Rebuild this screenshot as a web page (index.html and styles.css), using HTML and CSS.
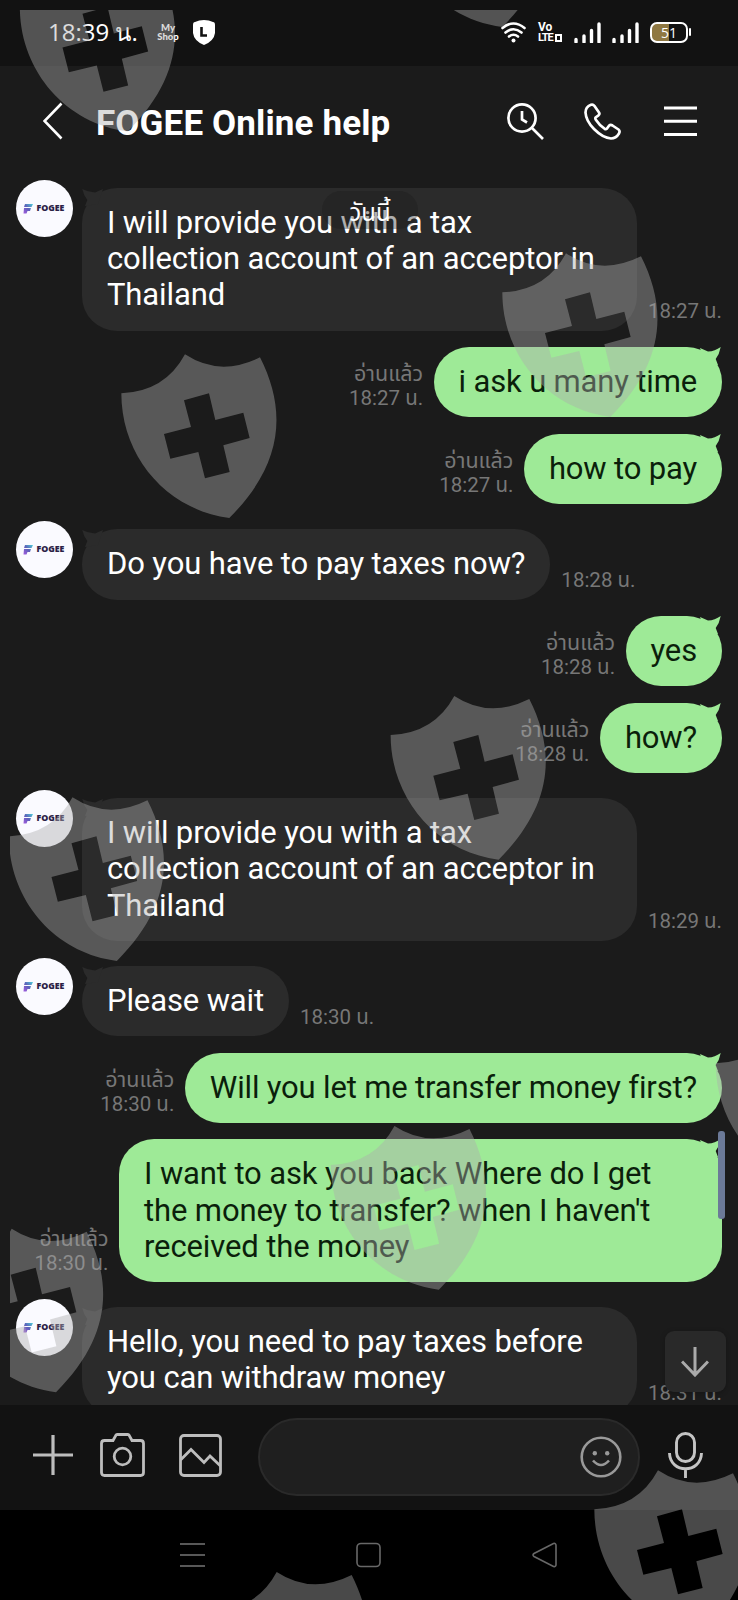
FILE: index.html
```html
<!DOCTYPE html>
<html lang="th">
<head>
<meta charset="utf-8">
<title>FOGEE Online help</title>
<link rel="stylesheet" href="styles.css">
</head>
<body>
<svg class="defs" width="0" height="0">
  <defs>
    <linearGradient id="flag" x1="1" y1="0" x2="0" y2="1"><stop offset="0" stop-color="#4fd0d8"/><stop offset=".5" stop-color="#5c5fb8"/><stop offset="1" stop-color="#a35be0"/></linearGradient>
    <symbol id="fogee" viewBox="0 0 10 11"><path d="M2 1H10L8.500 4H1zM1 5H8L7 8H4.500L3.500 10.500H.5z" fill="url(#flag)"/></symbol>
    <symbol id="tail-out" viewBox="0 0 24 20"><path d="M3 1L11 4.600Q18 4.200 23.700 0Q22.500 7 18.700 12L21 18L8 16z" fill="#9eea97"/></symbol>
    <symbol id="tail-in" viewBox="0 0 24 20"><path d="M21 1L13 4.600Q6 4.200 .3 1Q1.500 7 5.300 12L3 18L16 16z" fill="#2b2b2b"/></symbol>
    <symbol id="bars" viewBox="0 0 27 21"><path d="M2 20V17.500M10 20V14M17.500 20V8.500M25 20V2" fill="none" stroke="#fff" stroke-width="3.400" stroke-linecap="round"/></symbol>
    <path id="shield" fill-rule="evenodd" d="M255 43Q360 112 480 52C560 210 552 370 388 534C200 510 64 350 64 160Q195 155 255 43ZM252 181L327 160L346 240L430 218L449 294L370 316L389 396L315 415L295 336L211 356L192 282L273 261Z"/>
  </defs>
</svg>
<div class="phone">
  <div class="status">
    <span class="clock">18:39 น.</span>
    <span class="shop">My<br>Shop</span>
    <span class="badge"><svg width="22" height="25" viewBox="0 0 22 25"><path d="M11 0Q16 0 20 2Q22 2 22 5V13Q21 21 11 25Q1 21 0 13V5Q0 2 2 2Q6 0 11 0Z" fill="#fff"/><path d="M8.500 7V15.500H14" fill="none" stroke="#121212" stroke-width="2.600"/></svg></span>
    <span class="status-right">
      <svg width="26" height="22" viewBox="0 0 26 22" fill="none" stroke="#fff" stroke-width="2.600" stroke-linecap="round"><path d="M1.500 6Q12.500-3 23.500 6M4.500 10.500Q12.500 4 20.500 10.500M8 14.500Q12.500 11 17 14.500"/><circle cx="12.500" cy="18.500" r="2" fill="#fff" stroke="none"/></svg>
      <span class="volte"><span>Vo</span><span class="lte">LTE<i></i></span></span>
      <svg class="sig1" width="27" height="21"><use href="#bars"/></svg>
      <svg class="sig2" width="27" height="21"><use href="#bars"/></svg>
      <span class="battery"><span>51</span></span><i class="cap"></i>
    </span>
  </div>
  <div class="header">
    <svg width="20" height="38" viewBox="0 0 20 38"><path d="M18.500 1.500L1.500 19L18.500 36.500" fill="none" stroke="#fff" stroke-width="2.600"/></svg>
    <h1>FOGEE Online help</h1>
    <svg class="find" width="37" height="37" viewBox="0 0 37 37" fill="none" stroke="#fff" stroke-width="2.700"><circle cx="15" cy="15" r="13.600"/><path d="M15 8V16.500L20 19.500M25 25L36 36"/></svg>
    <svg class="call" width="37" height="37" viewBox="0 0 37 37" fill="none" stroke="#fff" stroke-width="2.700" stroke-linejoin="round"><path d="M7 1.800Q9 1 10.500 3L15 9.500Q16 11 14.500 12.300L11.500 14.500Q11 15.500 12 17Q16 23 20.500 25.700Q22 26.500 23 25.500L25 22.800Q26.500 21.300 28.500 22.500L34.500 26.500Q36.300 28 35 30.500Q32 35.500 27 35.500Q19 35 10 26Q2 18 1.500 9.500Q1.500 4 7 1.800Z"/></svg>
    <svg class="menu" width="33" height="31" viewBox="0 0 33 31"><path d="M0 2H33M0 15.300H33M0 28.600H33" stroke="#fff" stroke-width="3"/></svg>
  </div>
  <div class="chat">
    <div class="row in"><div class="avatar"><svg width="10" height="11"><use href="#fogee"/></svg>FOGEE</div><div class="bubble wide"><svg class="tail"><use href="#tail-in"/></svg>I will provide you with a tax<br>collection account of an acceptor in<br>Thailand</div><div class="meta">18:27 น.</div></div>
    <div class="row out"><div class="meta"><span class="read">อ่านแล้ว</span><br>18:27 น.</div><div class="bubble"><svg class="tail"><use href="#tail-out"/></svg>i ask u many time</div></div>
    <div class="row out"><div class="meta"><span class="read">อ่านแล้ว</span><br>18:27 น.</div><div class="bubble"><svg class="tail"><use href="#tail-out"/></svg>how to pay</div></div>
    <div class="row in"><div class="avatar"><svg width="10" height="11"><use href="#fogee"/></svg>FOGEE</div><div class="bubble"><svg class="tail"><use href="#tail-in"/></svg>Do you have to pay taxes now?</div><div class="meta">18:28 น.</div></div>
    <div class="row out"><div class="meta"><span class="read">อ่านแล้ว</span><br>18:28 น.</div><div class="bubble"><svg class="tail"><use href="#tail-out"/></svg>yes</div></div>
    <div class="row out"><div class="meta"><span class="read">อ่านแล้ว</span><br>18:28 น.</div><div class="bubble"><svg class="tail"><use href="#tail-out"/></svg>how?</div></div>
    <div class="row in"><div class="avatar"><svg width="10" height="11"><use href="#fogee"/></svg>FOGEE</div><div class="bubble wide"><svg class="tail"><use href="#tail-in"/></svg>I will provide you with a tax<br>collection account of an acceptor in<br>Thailand</div><div class="meta">18:29 น.</div></div>
    <div class="row in"><div class="avatar"><svg width="10" height="11"><use href="#fogee"/></svg>FOGEE</div><div class="bubble"><svg class="tail"><use href="#tail-in"/></svg>Please wait</div><div class="meta">18:30 น.</div></div>
    <div class="row out"><div class="meta"><span class="read">อ่านแล้ว</span><br>18:30 น.</div><div class="bubble"><svg class="tail"><use href="#tail-out"/></svg>Will you let me transfer money first?</div></div>
    <div class="row out"><div class="meta"><span class="read">อ่านแล้ว</span><br>18:30 น.</div><div class="bubble full"><svg class="tail"><use href="#tail-out"/></svg>I want to ask you back Where do I get<br>the money to transfer? when I haven't<br>received the money</div></div>
    <div class="row in last"><div class="avatar"><svg width="10" height="11"><use href="#fogee"/></svg>FOGEE</div><div class="bubble wide"><svg class="tail"><use href="#tail-in"/></svg>Hello, you need to pay taxes before<br>you can withdraw money</div><div class="meta">18:31 น.</div></div>
    <div class="date">วันนี้</div>
    <i class="scrollbar"></i>
    <div class="down"><svg width="28" height="31" viewBox="0 0 28 31" fill="none" stroke="#aaa" stroke-width="3"><path d="M14 1V29M1 15.500L14 29L27 15.500"/></svg></div>
  </div>
  <div class="compose">
    <svg class="plus" width="40" height="40" viewBox="0 0 40 40"><path d="M20 0V40M0 20H40" stroke="#bdbdbd" stroke-width="3.200"/></svg>
    <svg class="camera" width="45" height="44" viewBox="0 0 45 44" fill="none" stroke="#bdbdbd" stroke-width="2.800"><path d="M4.500 7.500H13L16 2Q16.500 1.500 17.500 1.500H27.500Q28.500 1.500 29 2L32 7.500H40.500Q43.500 7.500 43.500 10.500V39.500Q43.500 42.500 40.500 42.500H4.500Q1.500 42.500 1.500 39.500V10.500Q1.500 7.500 4.500 7.500Z"/><circle cx="22.500" cy="23.500" r="8.300"/></svg>
    <svg class="photo" width="43" height="43" viewBox="0 0 43 43" fill="none" stroke="#bdbdbd" stroke-width="2.800"><rect x="1.500" y="1.500" width="40" height="40" rx="3.500"/><path d="M1.500 26L12 15.500L25 28.500L31 22L41.500 32"/></svg>
    <div class="field"><svg width="42" height="42" viewBox="0 0 42 42" fill="none" stroke="#999" stroke-width="2.600"><circle cx="21" cy="21" r="19.300"/><path d="M13 24.500Q21 33.500 29 24.500"/><circle cx="14.800" cy="17.300" r="2.200" fill="#999" stroke="none"/><circle cx="27.200" cy="17.300" r="2.200" fill="#999" stroke="none"/></svg></div>
    <svg class="mic" width="35" height="46" viewBox="0 0 35 46" fill="none" stroke="#c4c4c4" stroke-width="2.900"><rect x="8.500" y="1.500" width="18" height="28" rx="9"/><path d="M1.500 21C2 42 33 42 33.500 21M17.500 37V46"/></svg>
  </div>
  <div class="nav">
    <svg width="25" height="26" viewBox="0 0 25 26"><path d="M0 2H25M0 13H25M0 24H25" stroke="#585858" stroke-width="1.800"/></svg>
    <svg width="25" height="26" viewBox="0 0 25 26"><rect x="1" y="1.500" width="23" height="23" rx="4" fill="none" stroke="#686868" stroke-width="1.600"/></svg>
    <svg width="25" height="26" viewBox="0 0 25 26"><path d="M21.500 1.500Q24 1 24 3.500V22.500Q24 25 21.500 24.500L2 14.500Q0 13 2 11.500Z" fill="none" stroke="#686868" stroke-width="1.600"/></svg>
  </div>
  <svg class="watermark" width="738" height="1600" viewBox="0 0 738 1600">
    <clipPath id="area"><rect x="10" y="10" width="728" height="1590"/></clipPath>
    <g clip-path="url(#area)" fill="#adadad" fill-opacity=".424">
      <use href="#shield" transform="translate(-1.500 -46.500) scale(.3333)"/>
      <use href="#shield" transform="translate(373 -151) scale(.3333)"/>
      <use href="#shield" transform="translate(481 239) scale(.3333)"/>
      <use href="#shield" transform="translate(100 340) scale(.3333)"/>
      <use href="#shield" transform="translate(369.300 681.700) scale(.3333)"/>
      <use href="#shield" transform="translate(-12.500 783) scale(.3333)"/>
      <use href="#shield" transform="translate(309.500 1111.700) scale(.3333)"/>
      <use href="#shield" transform="translate(694.400 1010) scale(.3333)"/>
      <use href="#shield" transform="translate(-73.300 1214.300) scale(.3333)"/>
      <use href="#shield" transform="translate(191.700 1557.700) scale(.3333)"/>
      <use href="#shield" transform="translate(573 1456) scale(.3333)"/>
    </g>
  </svg>
</div>
</body>
</html>
```
FILE: styles.css
```css
* { box-sizing: border-box; }
body { margin: 0; background: #1b1b1b; font-family: Roboto, "Noto Sans Thai", "Noto Sans", sans-serif; }
.defs { position: absolute; }
svg { display: block; flex: none; }
.phone { position: relative; width: 738px; height: 1600px; overflow: hidden; display: flex; flex-direction: column; }

.status { height: 66px; flex: none; background: #121212; color: #fff; display: flex; align-items: flex-start; padding-left: 48px; }
.clock { width: 108px; padding-top: 17px; font: 24px/30px "Open Sans", Roboto, sans-serif; white-space: nowrap; }
.shop { width: 24px; padding-top: 23px; font: 900 9.500px/9px Lato, sans-serif; text-align: center; display: flex; justify-content: center; }
.badge { margin-left: 13px; padding-top: 20px; }
.status-right { margin-left: auto; width: 237px; display: flex; align-items: flex-start; padding-top: 22px; }
.volte { margin-left: 11px; width: 25px; font: 700 12px/10px Roboto, sans-serif; display: flex; flex-direction: column; gap: 1px; }
.volte span { display: flex; }
.lte { font-size: 11px; letter-spacing: -1px; }
.volte i { width: 7px; height: 8px; border: 2px solid #fff; margin: 1px 0 0 2px; }
.sig1 { margin-left: 11px; }
.sig2 { margin-left: 11px; }
.battery { margin-left: 11px; width: 38px; height: 21px; border: 2px solid #fff; border-radius: 7px; background: linear-gradient(90deg, #8f7842 50%, #121212 50%); font: 14px/17px "Open Sans", sans-serif; text-align: center; }
.cap { width: 2px; height: 8px; margin: 6px 0 0 1px; background: #fff; border-radius: 1px; }

.header { height: 112px; flex: none; display: flex; align-items: flex-start; padding: 36px 41px 0 43px; color: #fff; }
.header h1 { margin: 2px 0 0 33px; font-size: 35px; letter-spacing: .13px; line-height: 40px; font-weight: 700; flex: 1; white-space: nowrap; }
.find { margin-top: 1px; }
.call { margin: 1px 43px 0 40px; }
.menu { margin-top: 4px; }

.chat { position: relative; height: 1227px; flex: none; overflow: hidden; padding: 1px 16px 0; display: flex; flex-direction: column; gap: 16px; }
.row { display: flex; flex: none; align-items: flex-end; }
.row.out { justify-content: flex-end; gap: 10.500px; height: 70.800px; }
.row.out:has(.full) { height: 143px; }
.row.in { gap: 11px; padding-top: 8.800px; align-items: flex-end; }
.avatar { width: 57px; height: 57px; margin: -8px -2px 0 0; align-self: flex-start; border-radius: 50%; background: #fafaff; color: #2a2146; font: 800 8.800px/11px "Open Sans", sans-serif; display: flex; align-items: center; justify-content: center; gap: 4px; padding-right: 2px; }
.bubble { position: relative; min-height: 70.600px; padding: 17px 25px; border-radius: 35px; font-size: 31px; letter-spacing: -.12px; line-height: 36.300px; white-space: nowrap; background: #2b2b2b; color: #fff; }
.wide { width: 555px; }
.out .bubble { background: #9eea97; color: #0b1f0b; letter-spacing: -.16px; }
.out .full { width: 603px; letter-spacing: -.12px; }
.tail { position: absolute; top: 0; width: 24px; height: 20px; }
.in .tail { left: 0; }
.out .tail { right: 1px; }
.meta { color: #777; font-size: 20.500px; line-height: 24px; padding-bottom: 7.500px; text-align: right; white-space: nowrap; }
.read { font-size: 21.500px; line-height: 20px; }
.last .meta { padding-bottom: 11px; }
.last .bubble { height: 109px; }
.date { position: absolute; left: 322px; top: 13px; width: 96px; height: 38px; border-radius: 19px; background: rgba(27, 27, 27, .35); color: #fff; font-size: 24px; line-height: 45px; text-align: center; }
.scrollbar { position: absolute; left: 718px; top: 953px; width: 7px; height: 88px; border-radius: 3px; background: #6c7a98; }
.down { position: absolute; left: 664.500px; top: 1153px; width: 61px; height: 61px; border-radius: 9px; background: #292929; box-shadow: 0 1px 5px rgba(0, 0, 0, .25); display: flex; align-items: center; justify-content: center; }

.compose { height: 105px; flex: none; background: #121212; display: flex; align-items: flex-start; padding: 13px 0 0 33px; }
.plus { margin-top: 17px; }
.camera { margin: 15px 0 0 27px; }
.photo { margin: 16px 0 0 34px; }
.field { width: 382px; height: 78px; margin-left: 36px; border: 2px solid #2a2a2a; border-radius: 39px; background: #1f1f1f; display: flex; justify-content: flex-end; align-items: center; padding-right: 16px; }
.mic { margin: 14px 0 0 28px; }
.nav { flex: 1; background: #000; display: flex; justify-content: space-between; align-items: flex-start; padding: 32px 181px 0 180px; }
.watermark { position: absolute; inset: 0; }
```
